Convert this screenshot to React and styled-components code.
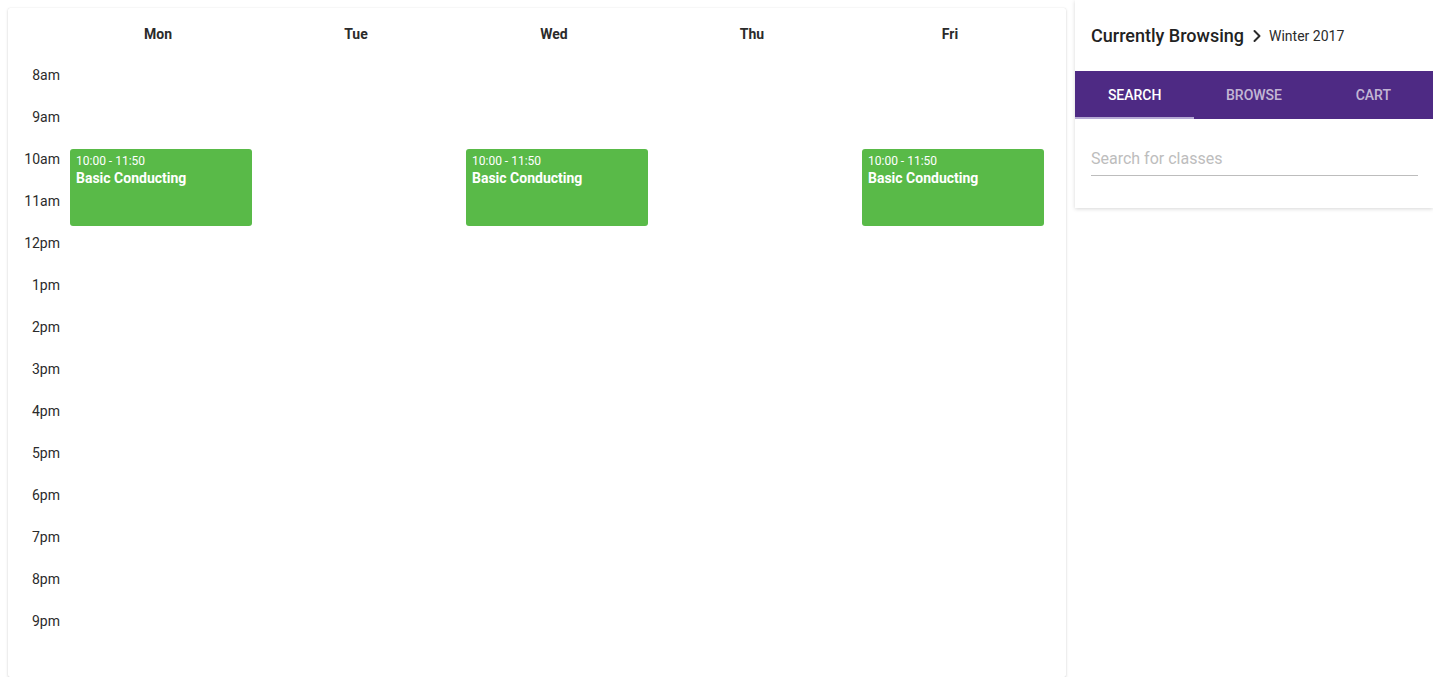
import styled, { createGlobalStyle } from 'styled-components';
import { ChevronRight } from 'lucide-react';

const DAYS = ['Mon', 'Tue', 'Wed', 'Thu', 'Fri'];
const HOURS = ['8am', '9am', '10am', '11am', '12pm', '1pm', '2pm', '3pm', '4pm', '5pm', '6pm', '7pm', '8pm', '9pm'];
const HOUR_H = 42;
const START = 8;

const events = [
    { day: 'Mon', start: 10, end: 11 + 50 / 60, time: '10:00 - 11:50', title: 'Basic Conducting' },
    { day: 'Wed', start: 10, end: 11 + 50 / 60, time: '10:00 - 11:50', title: 'Basic Conducting' },
    { day: 'Fri', start: 10, end: 11 + 50 / 60, time: '10:00 - 11:50', title: 'Basic Conducting' },
];

const App = () => {
    return (
        <>
            <GlobalStyle />
            <Page>
                <CalendarWrap>
                    <Calendar>
                        <HeadRow>
                            <Corner />
                            {DAYS.map((d) => (
                                <DayName key={d}>{d}</DayName>
                            ))}
                        </HeadRow>
                        <Body>
                            <TimeCol>
                                {HOURS.map((h) => (
                                    <TimeLabel key={h}>{h}</TimeLabel>
                                ))}
                            </TimeCol>
                            {DAYS.map((d) => (
                                <DayCol key={d}>
                                    {events
                                        .filter((e) => e.day === d)
                                        .map((e, i) => (
                                            <Event
                                                key={i}
                                                style={{
                                                    top: (e.start - START) * HOUR_H,
                                                    height: Math.round((e.end - e.start) * HOUR_H),
                                                }}
                                            >
                                                <EventTime>{e.time}</EventTime>
                                                <EventTitle>{e.title}</EventTitle>
                                            </Event>
                                        ))}
                                </DayCol>
                            ))}
                        </Body>
                    </Calendar>
                </CalendarWrap>

                <Sidebar>
                    <SideHeader>
                        <SideTitle>Currently Browsing</SideTitle>
                        <ChevronRight size={20} strokeWidth={2.4} color="#2b2b2b" />
                        <Term>Winter 2017</Term>
                    </SideHeader>
                    <Tabs>
                        <Tab $active>Search</Tab>
                        <Tab>Browse</Tab>
                        <Tab>Cart</Tab>
                    </Tabs>
                    <SearchArea>
                        <SearchInput placeholder="Search for classes" />
                    </SearchArea>
                </Sidebar>
            </Page>
        </>
    );
};

export default App;

const GlobalStyle = createGlobalStyle`
    body {
        margin: 0;
        background: #fff;
        font-family: Roboto, 'Liberation Sans', sans-serif;
        color: #2b2b2b;
    }
`;

const Page = styled.div`
    display: flex;
    align-items: flex-start;
    gap: 9px;
`;

const CalendarWrap = styled.div`
    padding: 8px 0 0 8px;
`;

const Calendar = styled.div`
    width: 1058px;
    box-sizing: border-box;
    padding-bottom: 24px;
    background: #fff;
    border-radius: 2px;
    box-shadow: 0 1px 3px rgba(0, 0, 0, 0.16), 0 0 1px rgba(0, 0, 0, 0.12);
`;

const HeadRow = styled.div`
    display: grid;
    grid-template-columns: 51px repeat(5, 198px);
    height: 57px;
    padding-top: 16px;
    box-sizing: border-box;
`;

const Corner = styled.div``;

const DayName = styled.div`
    text-align: center;
    font-size: 14px;
    font-weight: 700;
    line-height: 20px;
    color: #2b2b2b;
`;

const Body = styled.div`
    display: grid;
    grid-template-columns: 52px repeat(5, 198px);
`;

const TimeCol = styled.div`
    display: flex;
    flex-direction: column;
`;

const TimeLabel = styled.div`
    height: ${HOUR_H}px;
    text-align: right;
    font-size: 14px;
    line-height: 20px;
    color: #2b2b2b;
`;

const DayCol = styled.div`
    position: relative;
    height: ${HOURS.length * HOUR_H}px;
`;

const Event = styled.div`
    position: absolute;
    left: 10px;
    right: 6px;
    box-sizing: border-box;
    padding: 5px 6px;
    background: #59ba48;
    border-radius: 3px;
    color: #fff;
`;

const EventTime = styled.div`
    font-size: 12px;
    line-height: 15px;
`;

const EventTitle = styled.div`
    font-size: 14px;
    font-weight: 700;
    line-height: 18px;
`;

const Sidebar = styled.div`
    width: 358px;
    background: #fff;
    box-shadow: 0 1px 4px rgba(0, 0, 0, 0.16);
`;

const SideHeader = styled.div`
    display: flex;
    align-items: center;
    height: 71px;
    padding: 0 16px;
    box-sizing: border-box;

    svg {
        margin: 0 2px 0 3px;
    }
`;

const SideTitle = styled.div`
    font-size: 18px;
    font-weight: 500;
    color: #222;
`;

const Term = styled.div`
    font-size: 14px;
    color: #2b2b2b;
`;

const Tabs = styled.div`
    display: grid;
    grid-template-columns: repeat(3, 1fr);
    height: 48px;
    background: #4e2a84;
`;

const Tab = styled.div`
    display: flex;
    align-items: center;
    justify-content: center;
    font-size: 14px;
    font-weight: 500;
    text-transform: uppercase;
    color: ${(p) => (p.$active ? '#fff' : 'rgba(255, 255, 255, 0.68)')};
    border-bottom: 2px solid ${(p) => (p.$active ? '#b5a9d4' : 'transparent')};
    box-sizing: border-box;
    padding-top: 2px;
`;

const SearchArea = styled.div`
    padding: 29px 15px 32px 16px;
`;

const SearchInput = styled.input`
    display: block;
    width: 100%;
    box-sizing: border-box;
    border: none;
    border-bottom: 1px solid #bdbdbd;
    outline: none;
    padding: 0 0 5px;
    font-family: Roboto, 'Liberation Sans', sans-serif;
    font-size: 16px;
    line-height: 22px;
    color: #2b2b2b;

    &::placeholder {
        color: #bdbdbd;
    }
`;
